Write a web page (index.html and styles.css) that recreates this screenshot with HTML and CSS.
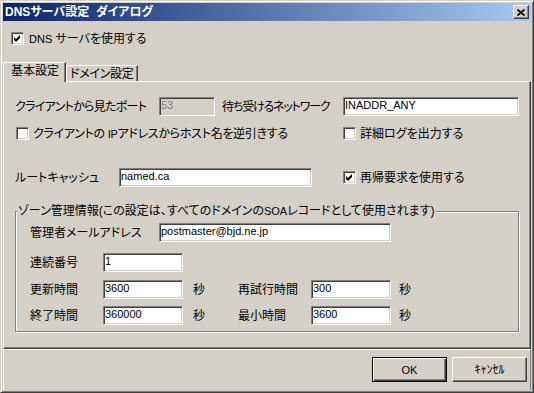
FILE: index.html
```html
<!DOCTYPE html>
<html lang="ja">
<head>
<meta charset="utf-8">
<title>DNSサーバ設定 ダイアログ</title>
<link rel="stylesheet" href="styles.css">
</head>
<body>
<div class="window">
  <div class="titlebar">
    <span class="title">DNSサーバ設定&nbsp; ダイアログ</span>
    <span class="close"><svg width="8" height="7" viewBox="0 0 8 7"><path d="M0.5 0.5 L7.5 6.5 M7.5 0.5 L0.5 6.5" stroke="#000" stroke-width="1.7" fill="none"/></svg></span>
  </div>

  <div class="check topcheck">
    <span class="box"><svg width="9" height="9" viewBox="0 0 9 9"><path d="M1 3 L3 5 L7 1 L7 4 L3 8 L1 6 Z" fill="#000"/></svg></span>
    <span class="lbl"><span class="lat">DNS</span> サーバを使用する</span>
  </div>

  <div class="tabs">
    <div class="tab active">基本設定</div>
    <div class="tab">ドメイン設定</div>
  </div>

  <div class="panel">
    <div class="row r1">
      <span class="lbl w144 tight1">クライアントから見たポート</span>
      <span class="input disabled w56">53</span>
      <span class="lbl w121 ml7 tight2">待ち受けるネットワーク</span>
      <span class="input w176">INADDR_ANY</span>
    </div>
    <div class="row r2">
      <div class="check w327">
        <span class="box"></span>
        <span class="lbl tight3">クライアントの <span class="lat">IP</span>アドレスからホスト名を逆引きする</span>
      </div>
      <div class="check">
        <span class="box"></span>
        <span class="lbl">詳細ログを出力する</span>
      </div>
    </div>
    <div class="row r3">
      <span class="lbl w104">ルートキャッシュ</span>
      <span class="input w193">named.ca</span>
      <div class="check ml31">
        <span class="box"><svg width="9" height="9" viewBox="0 0 9 9"><path d="M1 3 L3 5 L7 1 L7 4 L3 8 L1 6 Z" fill="#000"/></svg></span>
        <span class="lbl">再帰要求を使用する</span>
      </div>
    </div>

    <div class="group">
      <div class="legend">ゾーン管理情報(この設定は、すべてのドメインの<span class="lat">SOA</span>レコードとして使用されます)</div>
      <div class="row g1">
        <span class="lbl w129">管理者メールアドレス</span>
        <span class="input w232">postmaster@bjd.ne.jp</span>
      </div>
      <div class="row g2">
        <span class="lbl w73">連続番号</span>
        <span class="input w80">1</span>
      </div>
      <div class="row g3">
        <span class="lbl w73">更新時間</span>
        <span class="input w80">3600</span>
        <span class="sec">秒</span>
        <span class="lbl w73">再試行時間</span>
        <span class="input w80">300</span>
        <span class="sec last">秒</span>
      </div>
      <div class="row g4">
        <span class="lbl w73">終了時間</span>
        <span class="input w80">360000</span>
        <span class="sec">秒</span>
        <span class="lbl w73">最小時間</span>
        <span class="input w80">3600</span>
        <span class="sec last">秒</span>
      </div>
    </div>
  </div>

  <div class="buttons">
    <button class="btn default"><span class="lat">OK</span></button>
    <button class="btn">ｷｬﾝｾﾙ</button>
  </div>
</div>
</body>
</html>
```
FILE: styles.css
```css
html, body {
  margin: 0;
  background: #d4d0c8;
}
body {
  font-family: "Liberation Sans", "Noto Sans CJK JP", sans-serif;
  font-size: 12px;
  line-height: 14px;
  font-feature-settings: "palt";
  color: #000;
}

.window {
  width: 534px;
  height: 393px;
  box-sizing: border-box;
  border: 1px solid;
  border-color: #d4d0c8 #404040 #404040 #d4d0c8;
  box-shadow: inset 1px 1px #fff, inset -1px -1px #808080;
  padding: 2px;
  display: flex;
  flex-direction: column;
  background: #d4d0c8;
}

.titlebar {
  height: 18px;
  flex: none;
  background: linear-gradient(to right, #0a246a, #a6caf0);
  display: flex;
  align-items: center;
  justify-content: space-between;
  padding: 0 2px 0 2px;
}
.title {
  color: #fff;
  font-weight: bold;
  line-height: 14px;
}
.close {
  width: 16px;
  height: 14px;
  box-sizing: border-box;
  background: #d4d0c8;
  border: 1px solid;
  border-color: #fff #404040 #404040 #fff;
  box-shadow: inset -1px -1px #808080;
  display: flex;
  align-items: center;
  justify-content: center;
}
.close svg { display: block; }

.lat { font-size: 11px; }

.check {
  display: flex;
  align-items: center;
  gap: 4px;
  height: 13px;
}
.topcheck {
  margin: 11px 0 0 8px;
  gap: 5px;
  flex: none;
}
.box {
  width: 13px;
  height: 13px;
  box-sizing: border-box;
  flex: none;
  background: #fff;
  border: 1px solid;
  border-color: #808080 #fff #fff #808080;
  box-shadow: inset 1px 1px #404040, inset -1px -1px #d4d0c8;
  padding: 1px;
}
.box svg { display: block; }
.lbl { white-space: nowrap; flex: none; }

.tabs {
  display: flex;
  align-items: flex-end;
  margin-top: 17px;
  height: 20px;
  margin-bottom: -1px;
  position: relative;
  z-index: 1;
  flex: none;
}
.tab {
  box-sizing: border-box;
  width: 72px;
  height: 16px;
  margin-bottom: 1px;
  background: #d4d0c8;
  border-top: 1px solid #fff;
  border-left: 1px solid #fff;
  border-right: 1px solid #404040;
  box-shadow: inset -1px 0 #808080;
  border-top-left-radius: 2px;
  padding: 1px 0 0 3px;
  white-space: nowrap;
  letter-spacing: -0.3px;
}
.tab.active {
  width: 63px;
  height: 20px;
  margin-bottom: 0;
  padding: 1px 0 0 7px;
  letter-spacing: 0;
}

.panel {
  height: 268px;
  flex: none;
  box-sizing: border-box;
  border: 1px solid;
  border-color: #fff #404040 #404040 #fff;
  box-shadow: inset -1px -1px #808080;
  padding: 0 0 0 11px;
}

.row { display: flex; align-items: center; }
.r1 { margin-top: 15px; height: 19px; }
.r2 { margin-top: 11px; height: 13px; margin-left: 1px; }
.r3 { margin-top: 28px; height: 19px; }

.w56 { width: 56px; }
.w73 { width: 73px; }
.w80 { width: 80px; }
.w104 { width: 104px; }
.w121 { width: 121px; }
.w129 { width: 129px; }
.w144 { width: 144px; }
.w176 { width: 176px; }
.w193 { width: 193px; }
.w232 { width: 232px; }
.w327 { width: 327px; }
.ml7 { margin-left: 7px; }
.ml31 { margin-left: 31px; }
.tight1 { letter-spacing: -0.7px; }
.tight2 { letter-spacing: -1.2px; }
.tight3 { letter-spacing: -0.3px; }

.input {
  box-sizing: border-box;
  height: 19px;
  flex: none;
  background: #fff;
  border: 1px solid;
  border-color: #808080 #fff #fff #808080;
  box-shadow: inset 1px 1px #404040, inset -1px -1px #d4d0c8;
  font-size: 11px;
  line-height: 12px;
  padding: 1px 0 0 1px;
  white-space: nowrap;
  overflow: hidden;
}
.input.disabled {
  background: #d4d0c8;
  color: #808080;
}

.group {
  margin-top: 24px;
  width: 504px;
  height: 121px;
  box-sizing: border-box;
  border: 1px solid #808080;
  box-shadow: inset 1px 1px #fff, 1px 1px #fff;
  padding: 0 0 0 14px;
}
.legend {
  width: max-content;
  margin: -9px 0 0 -13px;
  padding: 0 1px;
  line-height: 16px;
  height: 16px;
  background: #d4d0c8;
  white-space: nowrap;
}
.g1 { margin-top: 4px; height: 19px; }
.g2 { margin-top: 11px; height: 19px; }
.g3 { margin-top: 8px; height: 19px; }
.g4 { margin-top: 7px; height: 19px; }
.sec { width: 45px; margin-left: 10px; flex: none; }
.sec.last { width: auto; margin-left: 8px; }

.buttons {
  flex: 1;
  box-sizing: border-box;
  border-top: 1px solid #fff;
  border-left: 1px solid #fff;
  border-right: 1px solid #808080;
  display: flex;
  justify-content: flex-end;
  align-items: flex-start;
  gap: 5px;
  padding: 7px 3px 0 0;
}
.btn {
  box-sizing: border-box;
  width: 75px;
  height: 25px;
  background: #d4d0c8;
  font: inherit;
  font-feature-settings: "palt";
  color: #000;
  border: 1px solid;
  border-color: #fff #404040 #404040 #fff;
  box-shadow: inset -1px -1px #808080;
  padding: 0;
  margin: 0;
}
.btn.default {
  border-color: #000;
  box-shadow: inset 1px 1px #fff, inset -1px -1px #404040, inset -2px -2px #808080;
}
```
